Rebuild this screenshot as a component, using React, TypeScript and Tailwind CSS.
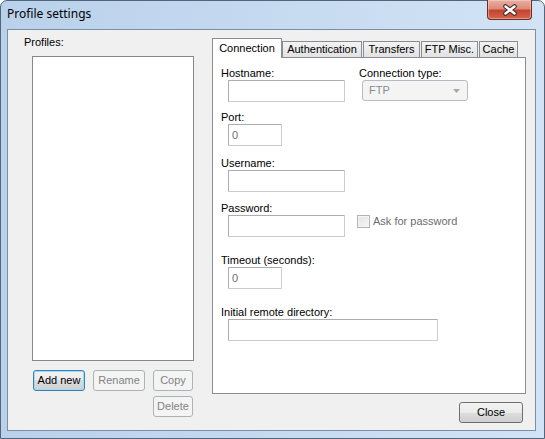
import React from "react";

function TextBox({ className, value }: { className: string; value?: string }) {
  return (
    <div
      className={
        "h-[22px] border border-[#abadb3] border-b-[#c9ccd3] border-r-[#c9ccd3] bg-white rounded-[1px] flex items-center pl-[3px] text-[#6d6d6d] " +
        className
      }
    >
      {value}
    </div>
  );
}

function Label({ children, className = "" }: { children: React.ReactNode; className?: string }) {
  return <div className={"h-[13px] leading-[13px] whitespace-nowrap " + className}>{children}</div>;
}

function CloseX() {
  return (
    <div className="mr-[12px] -mt-[1px] w-[45px] h-[20px] rounded-b-[4px] border border-t-0 border-[#6e2a22] bg-[linear-gradient(#eab0a4_0%,#dc8a79_45%,#c5432d_55%,#d2654f_100%)] shadow-[inset_0_0_0_1px_rgba(255,220,210,0.45)] flex items-center justify-center">
      <svg width="16" height="12" viewBox="0 0 16 12">
        <path d="M3.5 2.5 L12.5 9.5 M12.5 2.5 L3.5 9.5" stroke="#3a2a28" strokeWidth="4.5" strokeLinecap="round" />
        <path d="M3.5 2.5 L12.5 9.5 M12.5 2.5 L3.5 9.5" stroke="#ffffff" strokeWidth="2.5" strokeLinecap="round" />
      </svg>
    </div>
  );
}

function Tab({ label, className }: { label: string; className: string }) {
  return (
    <div
      className={
        "h-[16px] border border-b-0 border-[#898c95] bg-[linear-gradient(#f3f3f3,#e2e2e2)] flex items-center justify-center leading-[13px] whitespace-nowrap " +
        className
      }
    >
      {label}
    </div>
  );
}

export default function App() {
  return (
    <div className="w-[545px] h-[439px] bg-white font-['Liberation_Sans',Arial,sans-serif] text-[11px] leading-[13px] text-black">
      <div className="w-[545px] h-[439px] rounded-t-[7px] border border-[#53657a] bg-[linear-gradient(90deg,#b9d1eb,#d2e3f5)] flex flex-col">
        {/* Title bar */}
        <div className="h-[28px] flex justify-between items-start">
          <div className="pl-[6px] pt-[5px] font-['Noto_Sans',sans-serif] text-[12px] leading-[16px] text-black">
            Profile settings
          </div>
          <CloseX />
        </div>

        {/* Client area */}
        <div className="ml-[6px] mr-[8px] h-[402px] border border-[#7b8ea4] bg-[#f0f0f0] flex">
          {/* Left column */}
          <div className="w-[204px] flex flex-col">
            <Label className="ml-[16px] mt-[6px]">Profiles:</Label>
            <div className="ml-[24px] mt-[7px] w-[162px] h-[305px] border border-[#828790] bg-white" />
            <div className="ml-[25px] mt-[9px] flex gap-[8px]">
              <div className="w-[52px] h-[21px] rounded-[3px] border border-[#3c7fb1] bg-[linear-gradient(#f2f2f2_0%,#ebebeb_50%,#dddddd_50%,#cfcfcf_100%)] shadow-[inset_0_0_0_1px_#9fdcfa] flex items-center justify-center">
                Add new
              </div>
              <div className="w-[52px] h-[21px] rounded-[3px] border border-[#adb2b5] bg-[#f4f4f4] text-[#838383] flex items-center justify-center">
                Rename
              </div>
              <div className="w-[40px] h-[21px] rounded-[3px] border border-[#adb2b5] bg-[#f4f4f4] text-[#838383] flex items-center justify-center">
                Copy
              </div>
            </div>
            <div className="ml-[145px] mt-[5px] w-[40px] h-[21px] rounded-[3px] border border-[#adb2b5] bg-[#f4f4f4] text-[#838383] flex items-center justify-center">
              Delete
            </div>
          </div>

          {/* Right column */}
          <div className="flex-1 flex flex-col">
            <div className="h-[19px] mt-[8px] flex items-end">
              <div className="relative z-10 w-[70px] h-[20px] -mb-[1px] border border-b-0 border-[#898c95] bg-white flex items-start justify-center pt-[3px] leading-[13px]">
                Connection
              </div>
              <Tab label="Authentication" className="w-[80px]" />
              <Tab label="Transfers" className="ml-[1px] w-[57px]" />
              <Tab label="FTP Misc." className="ml-[1px] w-[57px]" />
              <Tab label="Cache" className="ml-[1px] w-[39px]" />
            </div>
            <div className="w-[314px] h-[337px] border border-[#898c95] bg-white flex flex-col">
              {/* Hostname / Connection type */}
              <div className="mt-[9px] ml-[8px] flex">
                <div className="w-[138px] flex flex-col">
                  <Label>Hostname:</Label>
                  <TextBox className="ml-[7px] w-[117px]" />
                </div>
                <div className="flex flex-col">
                  <Label>Connection type:</Label>
                  <div className="ml-[3px] w-[106px] h-[21px] rounded-[3px] border border-[#b8bcc0] bg-[#f4f4f4] flex items-center justify-between pl-[6px] pr-[7px] text-[#8a8a8a]">
                    <span>FTP</span>
                    <svg width="7" height="4" viewBox="0 0 7 4">
                      <path d="M0 0 L7 0 L3.5 4 Z" fill="#a8a8a8" />
                    </svg>
                  </div>
                </div>
              </div>

              {/* Port */}
              <div className="mt-[9px] ml-[8px] flex flex-col">
                <Label>Port:</Label>
                <TextBox className="ml-[7px] w-[54px]" value="0" />
              </div>

              {/* Username */}
              <div className="mt-[11px] ml-[8px] flex flex-col">
                <Label>Username:</Label>
                <TextBox className="ml-[7px] w-[117px]" />
              </div>

              {/* Password */}
              <div className="mt-[10px] ml-[8px] flex">
                <div className="w-[136px] flex flex-col">
                  <Label>Password:</Label>
                  <TextBox className="ml-[7px] w-[117px]" />
                </div>
                <div className="pt-[13px] flex items-start gap-[3px]">
                  <div className="w-[13px] h-[13px] border border-[#b4b4b4] bg-[linear-gradient(135deg,#e4e4e4,#f6f6f6)] shadow-[inset_0_0_0_1px_#f4f4f4]" />
                  <span className="text-[#6d6d6d] leading-[13px]">Ask for password</span>
                </div>
              </div>

              {/* Timeout */}
              <div className="mt-[17px] ml-[8px] flex flex-col">
                <Label>Timeout (seconds):</Label>
                <TextBox className="ml-[7px] w-[54px]" value="0" />
              </div>

              {/* Initial remote directory */}
              <div className="mt-[17px] ml-[8px] flex flex-col">
                <Label>Initial remote directory:</Label>
                <TextBox className="ml-[7px] w-[210px]" />
              </div>
            </div>
            <div className="self-end mr-[12px] mt-[8px] w-[64px] h-[21px] rounded-[3px] border border-[#707070] bg-[linear-gradient(#f2f2f2_0%,#ebebeb_50%,#dddddd_50%,#cfcfcf_100%)] flex items-center justify-center">
              Close
            </div>
          </div>
        </div>
      </div>
    </div>
  );
}
